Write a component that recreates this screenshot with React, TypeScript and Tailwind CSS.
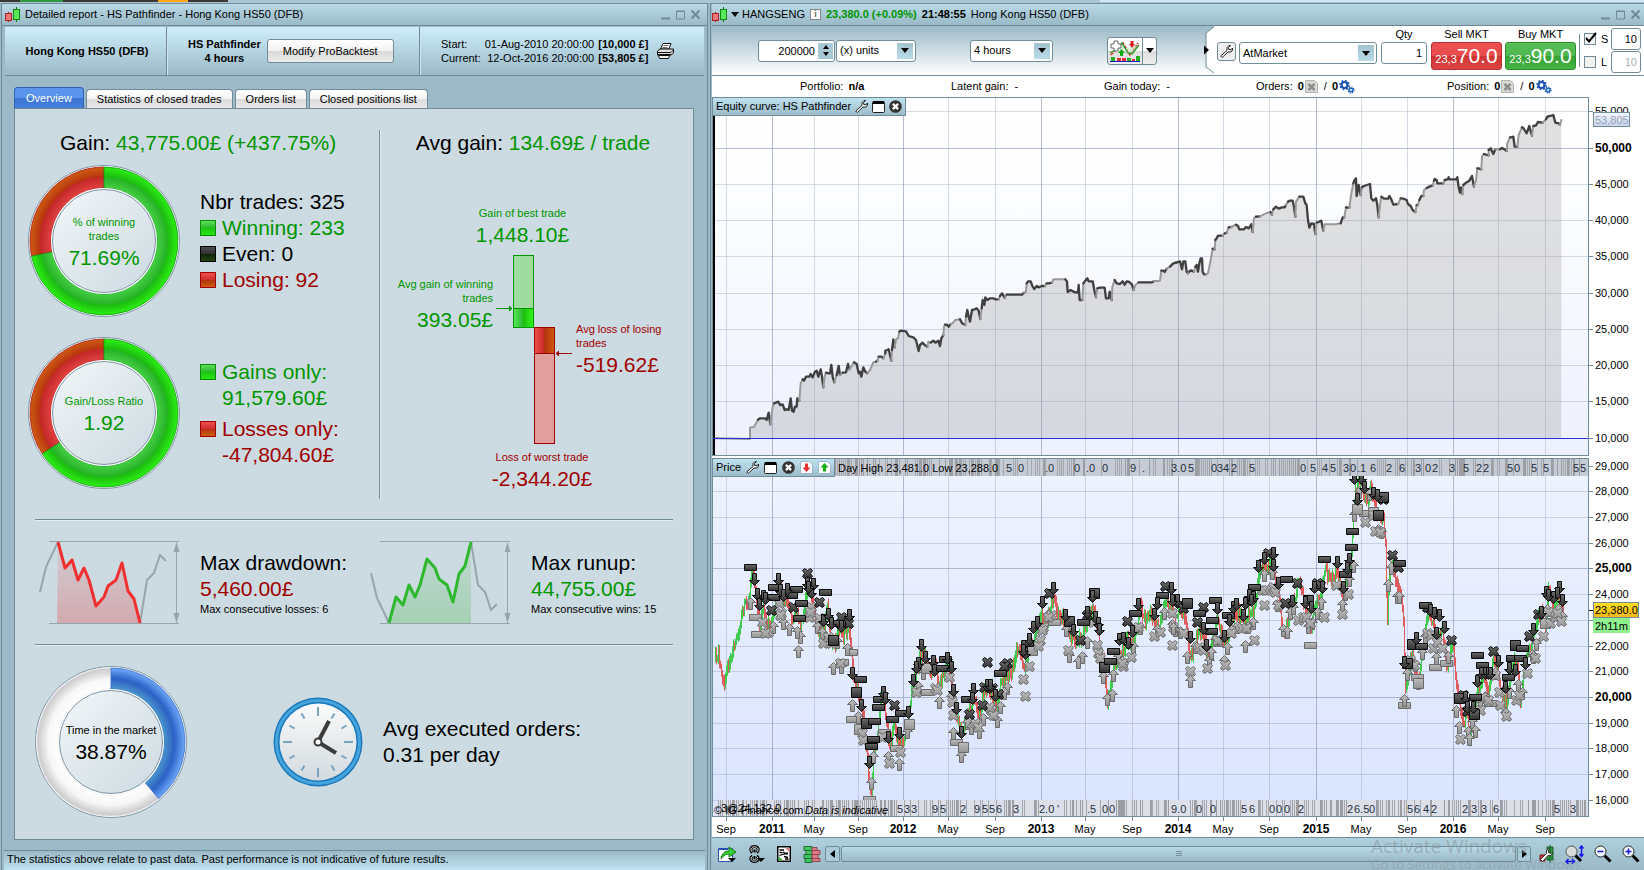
import React from "react";

/* ------------------------------------------------------------------ */
/* Chart data. Coordinates are thirds of a pixel, measured from the    */
/* origin of each plot.                                                */
/* ------------------------------------------------------------------ */

// "d" runs are bars with an open position, "g" runs are bars out of the market.
const EQUITY_A = `g 45,1045 150,1047 150,1013 162,1011 174,989
d 180,985 195,985 200,990 206,968 211,1003
g 218,950 222,940
d 228,938 235,935 240,945 248,943 254,960 260,958 266,960 272,925 276,962 281,965 285,950 290,950 292,925 298,932
g 302,880 308,868
d 312,872 318,860 328,860 332,852 338,862 345,845 350,842 355,860 362,838 366,860 370,892
g 374,860 378,848
d 386,850 390,850 394,825 398,860 403,877
g 410,855
d 416,828 420,855
g 428,848
d 438,847 444,822 448,838
g 454,830 462,817
d 470,822 476,850 480,845 484,860 490,832 496,845 502,850
g 510,840 520,817 528,815
d 532,812
g 536,800
d 544,800 550,805
g 556,790
d 556,782 562,780 566,778 570,795 574,812
g 576,780
d 580,748 584,772
g 588,748 594,745 598,725
d 602,722 618,724 626,738 640,742 648,750 656,783 660,765 668,758 674,765 682,770
g 685,755 692,758
d 700,752 706,758 715,752 720,768 724,745 730,735
g 732,710 735,704
d 740,704 746,710 752,702
g 758,700 766,690 780,688
d 786,700 796,705
g 798,680
d 802,660 806,680 810,695 816,660 824,658 830,655 836,662 841,687
g 845,655
d 848,630 853,645 856,622 862,630 870,625 880,625 888,628 896,628
g 900,618
d 906,610 915,624
g 920,614
d 966,614 972,608
g 978,606 980,580
d 984,574 992,574 998,590 1003,597 1010,588 1016,592 1025,588 1035,588
g 1040,580
d 1046,580 1056,578
g 1060,568 1096,568
d 1101,575 1103,606 1112,600 1122,606 1134,608 1136,585 1139,630 1147,630
g 1150,580
d 1156,572 1162,565 1166,574 1178,574 1184,605 1188,622
g 1192,595
d 1200,593 1214,593 1218,625 1226,625 1229,605 1235,630
g 1237,590 1244,570
d 1250,580 1260,582 1268,574 1274,584 1280,574 1288,576 1296,584 1301,600
g 1306,585 1316,577
d 1356,577 1362,574
g 1380,572 1384,542
d 1390,542 1394,546 1400,536
g 1410,530
d 1420,520 1428,518`;

const EQUITY_B = `d 60,514 66,538 70,514 76,514 80,545 84,550
g 88,545
d 92,541 102,545
g 106,530
d 110,525 114,545 118,520 122,505 126,505 128,545 132,553 138,553
g 144,550 152,510 158,476
d 164,478
g 166,450
d 170,445 174,437 188,437
g 194,430
d 200,428
g 206,412
d 214,411
g 228,404
d 234,408 238,418 252,418 258,411 266,415 274,403 278,426
g 282,384 288,380
d 300,379
g 318,370 332,366
d 336,374
g 340,358
d 348,350 356,356 366,352 374,352 378,345
g 384,335
d 390,332 398,332 402,350 406,380
g 408,335 418,320
d 430,320 436,340 440,345 444,390 448,413 454,400 462,402 466,432
g 470,398
d 476,396 484,392 490,422
g 494,403 526,403 542,400
d 548,382 553,382
g 558,352
d 562,353 568,352
g 574,310 580,280
d 584,270 588,265 590,318 596,285 602,315
g 606,292
d 612,288 630,282 634,325 640,332 648,325 652,345 656,382
g 660,345 664,320
d 672,326 684,326 688,318 694,328 700,344 714,342
g 722,325
d 730,326 740,330 744,342 752,348 758,360 766,366
g 770,345
d 774,345
g 778,330
d 784,318 790,318
g 792,300 800,294
d 808,290 818,286
g 822,272
d 824,267 830,270 832,280 850,280
g 854,270
d 862,268 866,262 868,268 888,268 892,262 896,292 900,308 903,292 907,312
g 910,285
d 918,278 928,272 936,258 942,290
g 948,270 952,235
d 956,235 964,238
g 966,200 972,192
d 978,194 986,196
g 986,180
d 992,175 1000,192 1006,178
g 1020,178
d 1026,174 1034,178 1040,183
g 1042,160 1050,142
d 1054,142 1060,140 1064,170 1072,170
g 1076,135 1086,112
d 1090,114 1100,130 1108,108 1116,137
g 1120,108
d 1128,106 1134,96 1148,98
g 1158,88
d 1162,80 1170,78 1180,75 1186,98 1196,100 1200,104
g 1204,90`;

const PRICE_A =
  "45,650 55,640 62,700 72,735 80,690 95,640 110,590 122,540 132,490 142,510 152,400 160,410 168,480 178,560 190,500 200,560 215,540 225,480 240,450 250,500 262,480 275,540 290,510 300,560 315,480 325,440 335,490 345,530 355,580 370,560 380,500 392,600 405,610 415,570 430,590 445,560 452,620 460,730 475,760 490,830 500,950 505,1000 512,1070 520,920 530,910 540,780 548,760 556,830 568,920 580,850 590,900 600,930 612,890 625,820 635,740 648,700 660,650 675,650 690,700 705,680 715,740 730,700 745,660 755,740 770,840 784,880 795,850 805,800 820,780 835,830 850,760 862,740 875,770 890,800 900,740 915,700 930,710 945,640 958,630 970,690 980,640 995,610 1010,560 1025,530 1035,560 1050,500 1060,470 1070,520 1085,530 1100,560 1115,600 1130,600 1145,590 1160,540 1178,500 1190,550 1200,630 1212,680 1220,790 1230,740 1240,690 1255,640 1270,630 1280,590 1295,620 1310,560 1320,500 1335,550 1348,510 1362,540 1378,560 1392,480 1405,500 1415,520 1430,540";
const PRICE_B =
  "60,510 75,530 88,640 100,640 115,560 130,600 145,650 160,580 170,540 185,590 195,620 205,570 220,530 235,520 250,560 265,530 280,520 295,400 310,380 325,380 335,370 350,430 370,590 378,560 390,500 405,480 418,410 428,480 440,520 452,570 465,490 480,470 495,390 505,410 520,420 530,390 545,470 558,430 570,390 577,270 585,160 598,120 610,170 620,200 630,130 640,190 655,230 668,220 675,310 680,560 685,420 695,370 710,440 722,470 730,560 735,760 745,690 755,640 775,730 790,600 800,520 815,540 830,600 845,560 858,690 870,640 878,610 888,740 900,800 910,860 918,800 928,910 940,830 955,730 970,720 985,760 998,650 1012,680 1025,780 1040,790 1055,680 1070,650 1080,790 1092,680 1110,620 1125,560 1140,510 1155,560 1165,440 1180,500 1195,470 1210,520";

type Kind = "r" | "s" | "d" | "x" | "u";
const LIGHT_A: [Kind, string][] = [
  ["r", "166,530 172,583 452,635 427,665 457,838 553,877 508,1076 589,925 682,757 769,907 1063,547"],
  ["u", "151,490 301,592 295,634 268,568 250,550 290,575 220,560 352,560 365,580 400,685 424,682 412,605 440,628 456,796 475,830 520,950 514,1030 565,950 596,972 620,875 670,700 718,785 655,740 760,878 752,770 784,948 800,850 812,865 838,875 848,838 890,842 899,800 920,745 912,760 1098,570 1108,648 1133,665 1147,650 1160,605 1210,712 1240,705 1222,776 1235,765 1255,650 1300,620 1265,665 1320,565 1370,570 1392,520 1415,555 1425,570 1045,525"],
  ["s", "628,852 476,866 679,684 788,922 997,630"],
  ["x", "187,547 205,575 195,580 243,520 238,490 240,525 328,530 333,500 330,515 358,535 370,608 385,590 392,610 420,670 485,880 488,900 568,968 600,935 545,890 648,755 705,745 712,750 748,710 755,785 760,825 826,850 833,862 873,810 880,825 867,800 970,716 976,769 988,678 1020,600 1015,618 1030,560 1025,570 1052,525 1045,530 1180,545 1190,615 1195,640 1200,655 1270,678 1265,670 1292,652 1315,560 1363,588 1380,575 1416,614 1416,520 1420,560 1105,630"],
];
const DARK_A: [Kind, string][] = [
  ["x", "320,398 214,510 280,502 358,485 422,530 445,548 583,796 862,667 920,670 912,678 853,740 845,795 808,822 893,762 875,745 1048,458 1141,600 1280,544 1396,438 1160,525"],
  ["s", "469,757 497,850 398,600 1183,458 1213,680 1106,542"],
  ["r", "151,382 223,440 220,470 289,446 272,466 304,488 298,533 376,455 481,718 416,548 538,776 535,802 521,844 518,896 514,919 577,838 603,820 734,658 725,685 901,698 800,776 980,610 1150,545 1239,634 1230,662 1306,520 1385,466"],
  ["d", "163,418 172,462 188,468 178,492 196,475 235,417 240,450 260,446 250,465 320,430 340,432 332,455 325,440 368,540 385,522 392,548 448,526 423,558 457,700 484,795 550,755 556,775 565,890 598,880 508,966 664,616 676,650 698,662 655,668 649,682 640,720 703,690 742,655 752,682 760,750 769,805 625,815 784,877 820,748 815,775 862,735 870,735 885,765 1026,486 1060,445 1012,545 1000,562 988,598 975,640 968,630 1096,526 1118,570 1162,516 1186,530 1194,550 1198,568 1258,598 1270,595 1285,608 1297,572 1315,492 1370,490 1362,522 1414,445 1415,480 1430,485 1177,468"],
];
const LIGHT_B: [Kind, string][] = [
  ["r", "451,616 733,796 824,682 858,670 770,712 615,218 990,790"],
  ["u", "40,565 60,575 82,650 91,724 105,620 147,662 154,640 166,600 180,600 202,625 193,662 215,570 230,560 256,618 280,550 265,560 313,405 335,400 350,495 368,570 380,575 390,520 400,505 470,520 484,490 445,560 455,550 545,495 568,420 556,462 580,378 583,225 598,155 628,162 655,270 662,275 692,385 685,435 712,470 718,470 733,780 742,702 775,730 786,640 765,675 795,590 828,655 865,650 889,812 898,862 925,875 928,898 937,846 946,872 960,790 975,770 1005,700 1047,755 1075,735 1085,760 1115,645 1127,612 1120,650 1035,820 1160,510 1195,510 1205,530"],
  ["s", "592,208 640,215 775,728 1155,550"],
  ["x", "70,580 91,692 118,620 130,630 142,685 172,600 212,580 245,565 258,565 196,675 281,600 313,495 315,450 305,450 340,440 345,455 355,495 415,540 430,530 438,530 450,550 493,532 528,435 547,522 565,462 616,247 646,272 640,225 660,275 750,660 762,675 800,580 812,585 820,625 832,605 845,625 900,898 965,770 985,780 960,810 1005,705 1018,756 1020,795 1037,828 1067,780 1078,765 1100,700 1125,655 1148,588 1163,515 1170,548 1185,530 1190,520 1203,542"],
];
const DARK_B: [Kind, string][] = [
  ["x", "70,505 130,502 112,545 325,340 375,490 412,430 470,430 480,435 695,345 715,382 800,500 668,178 872,600 910,765 922,812 1000,632 1108,588 1133,522"],
  ["s", "82,488 444,480 655,225 668,170 755,612 742,670 896,775 941,822 1064,616"],
  ["r", "283,440 205,524 118,520 157,541 154,574 166,479 379,418 493,358 556,401 574,320 577,274 795,494 952,646 967,676 946,772 1045,712 1055,655 1080,655 1085,625 718,368 782,617"],
  ["d", "50,480 35,480 90,590 130,565 139,615 170,505 193,588 208,540 220,500 228,492 250,525 266,465 280,470 272,480 255,490 295,378 311,355 340,375 338,340 355,430 395,482 463,440 487,440 530,367 568,358 548,440 435,485 452,500 560,385 583,115 604,115 613,140 590,178 640,160 650,165 767,595 733,665 810,510 822,520 838,525 828,578 853,562 915,770 920,800 938,800 952,724 962,700 975,700 985,700 990,700 1015,664 1048,683 1036,740 1065,690 1095,670 1158,456 1120,568 1198,442 1192,460 1180,470 1205,480 1165,465 1143,515"],
];

type Pt = [number, number];
const parse = (s: string, shift = 0): Pt[] =>
  s.trim().split(/\s+/).map((p) => {
    const [x, y] = p.split(",").map(Number);
    return [x + shift, y];
  });

const hash = (n: number) => {
  const v = Math.sin(n * 127.1 + 11.7) * 43758.5453;
  return v - Math.floor(v);
};

const equityRuns = (() => {
  const runs: { dark: boolean; pts: Pt[] }[] = [];
  let last: Pt | null = null;
  const add = (src: string, shift: number) =>
    src.split("\n").forEach((line) => {
      const pts = parse(line.slice(2), shift);
      runs.push({ dark: line[0] === "d", pts: last ? [last, ...pts] : pts });
      last = pts[pts.length - 1];
    });
  add(EQUITY_A, 0);
  add(EQUITY_B, 1380);
  return runs;
})();
const join = (pts: Pt[]) => pts.map((p) => p.join(",")).join(" ");
const equityArea = "150,1045 " + equityRuns.map((r) => join(r.pts)).join(" ") + " 2584,1045";

const candles = (() => {
  const path = [...parse(PRICE_A), ...parse(PRICE_B, 1380)];
  const out: { x: number; a: number; b: number; up: boolean }[] = [];
  let seg = 0;
  let prev = path[0][1];
  for (let x = 45; x < 2590; x += 3) {
    while (seg < path.length - 2 && path[seg + 1][0] < x) seg++;
    const [x0, y0] = path[seg];
    const [x1, y1] = path[seg + 1];
    const y = y0 + ((y1 - y0) * (x - x0)) / (x1 - x0) + (hash(x) - 0.5) * 28;
    const pad = 6 + hash(x + 5) * 16;
    out.push({ x, a: Math.min(prev, y) - pad, b: Math.max(prev, y) + pad, up: y < prev });
    prev = y;
  }
  return out;
})();

const TIME_TICKS: [number, string][] = [
  [14, "Sep"], [60, "2011"], [102, "May"], [146, "Sep"], [191, "2012"], [236, "May"], [283, "Sep"],
  [329, "2013"], [373, "May"], [420, "Sep"], [466, "2014"], [511, "May"], [557, "Sep"], [604, "2015"],
  [649, "May"], [695, "Sep"], [741, "2016"], [786, "May"], [833, "Sep"],
];
const EQUITY_TICKS: [number, string][] = [
  [14, "55,000"], [51, "50,000"], [87, "45,000"], [123, "40,000"], [159, "35,000"],
  [196, "30,000"], [232, "25,000"], [268, "20,000"], [304, "15,000"], [341, "10,000"],
];
const PRICE_TICKS: [number, string][] = [
  [369, "29,000"], [394, "28,000"], [420, "27,000"], [446, "26,000"], [471, "25,000"], [497, "24,000"],
  [523, ""], [549, "22,000"], [574, "21,000"], [600, "20,000"], [626, "19,000"],
  [651, "18,000"], [677, "17,000"], [703, "16,000"],
];
const TOP_LABELS: [number, string][] = [
  [294, "5"], [306, "0"], [333, ".0"], [362, "0"], [374, ".0"], [390, "0"], [418, "9"], [430, "."],
  [459, "3.0"], [476, "5"], [499, "0"], [505, "3"], [511, "4"], [519, "2"], [537, "5"], [588, "0"],
  [598, "5"], [610, "4"], [618, "5"], [631, "3"], [638, "0"], [645, ".1"], [658, "6"], [674, "2"], [687, "6"], [703, "3"],
  [713, "0"], [720, "2"], [737, "3"], [751, "5"], [764, "2"], [771, "2"], [795, "5"], [802, "0"], [819, "5"], [831, "5"], [861, "5"], [868, "5"],
];
const BOTTOM_LABELS: [number, string][] = [
  [185, "5"], [192, "3"], [199, "3"], [220, "9"], [228, "5"], [248, "2"], [262, "9"], [270, "5"],
  [277, "5"], [284, "6"], [301, "3"], [327, "2.0"], [345, "'"], [375, ".5"], [390, "0"], [397, "0"], [459, "9.0"],
  [484, "0"], [498, "0"], [529, "5"], [537, "6"], [557, "0"], [564, "0"], [572, "0"], [586, "2"], [635, "2"], [642, "6.5"], [657, "0"],
  [695, "5"], [702, "6"], [711, "4"], [719, "2"], [750, "2"], [759, "3"], [769, "3"], [781, "6"], [842, "5"], [858, "3"],
];

/* ------------------------------------------------------------------ */
/* Charts                                                              */
/* ------------------------------------------------------------------ */

const SHAPES: Record<Kind, string> = {
  r: "M-6-3H6V3H-6Z",
  s: "M-5-5H5V5H-5Z",
  d: "M-2-6H2V1H5L0 6L-5 1H-2Z",
  u: "M-2 6H2V-1H5L0-6L-5-1H-2Z",
  x: "M-5-3L-3-5L0-3L3-5L5-3L3 0L5 3L3 5L0 3L-3 5L-5 3L-3 0Z",
};

function Markers({ sets, shift, dark }: { sets: [Kind, string][]; shift: number; dark: boolean }) {
  return (
    <g fill={dark ? "url(#mk-dark)" : "url(#mk-light)"} stroke={dark ? "#0a0a0a" : "#6b6b6b"} strokeWidth={1}>
      {sets.flatMap(([kind, list]) =>
        parse(list, shift).map(([x, y], i) => (
          <path key={kind + i} d={SHAPES[kind]} transform={`translate(${Math.round(x / 3) - 11.5} ${Math.round(y / 3) + 343.5})`} />
        )),
      )}
    </g>
  );
}

function Hatch({ y, h, from, labels, bg }: { y: number; h: number; from: number; labels: [number, string][]; bg: string }) {
  const bars: React.ReactElement[] = [];
  for (let x = from; x < 874; x += 2) {
    if (labels.some(([lx, t]) => x > lx && x < lx + t.length * 6)) continue;
    const k = hash(x + y);
    if (k > 0.28) bars.push(<rect key={x} x={x} y={y} width={k > 0.86 ? 2 : 1} height={h} fill={k > 0.75 ? "#9c9ea3" : "#a6a8af"} />);
  }
  return (
    <g>
      <rect x={from} y={y} width={876 - from} height={h} fill={bg} />
      {bars}
      {labels.map(([x, t], i) => (
        <text key={i} x={x} y={y + 13} fill="#23303f">{t}</text>
      ))}
    </g>
  );
}

function Grid({ top, bottom, rows }: { top: number; bottom: number; rows: [number, string][] }) {
  return (
    <g stroke="#8890b4" strokeWidth={1}>
      {rows.map(([y, t]) => (
        <line key={y} x1={1} x2={876} y1={y + 0.5} y2={y + 0.5} opacity={/^(50|25|20),000/.test(t) && (top > 300 || t[0] === "5") ? 0.6 : 0.32} />
      ))}
      {TIME_TICKS.map(([x, t]) => (
        <line key={x} x1={x + 0.5} x2={x + 0.5} y1={top} y2={bottom} opacity={t[0] === "2" ? 0.6 : 0.32} />
      ))}
    </g>
  );
}

function Charts() {
  return (
    <svg viewBox="0 0 932 740" className="block w-full" fontFamily="'Liberation Sans', Arial, sans-serif" fontSize={11}>
      <defs>
        <linearGradient id="bg-eq" x1="0" y1="0" x2="0" y2="1"><stop offset="0" stopColor="#ffffff" /><stop offset=".3" stopColor="#fcfdff" /><stop offset="1" stopColor="#edf1fe" /></linearGradient>
        <linearGradient id="bg-pr" x1="0" y1="0" x2="0" y2="1"><stop offset="0" stopColor="#eef3ff" /><stop offset="1" stopColor="#dae4ff" /></linearGradient>
        <linearGradient id="mk-dark" x1="0" y1="0" x2="0" y2="1"><stop offset="0" stopColor="#6b6b6b" /><stop offset="1" stopColor="#303030" /></linearGradient>
        <linearGradient id="mk-light" x1="0" y1="0" x2="0" y2="1"><stop offset="0" stopColor="#bcbcbc" /><stop offset="1" stopColor="#949494" /></linearGradient>
        <linearGradient id="tag-y" x1="0" y1="0" x2="0" y2="1"><stop offset="0" stopColor="#ffe11a" /><stop offset="1" stopColor="#f5b616" /></linearGradient>
        <linearGradient id="tag-b" x1="0" y1="0" x2="0" y2="1"><stop offset="0" stopColor="#f4f7ff" /><stop offset="1" stopColor="#c6d4ee" /></linearGradient>
        <clipPath id="clip-pr"><rect x={1} y={379} width={875} height={324} /></clipPath>
      </defs>
      <rect width={932} height={740} fill="#fff" />

      {/* equity curve */}
      <rect x={0.5} y={0.5} width={876} height={358} fill="url(#bg-eq)" />
      <Grid top={1} bottom={358} rows={EQUITY_TICKS} />
      <g transform="translate(-12 -7) scale(.33333)">
        <polygon points={equityArea} fill="#9a9a9a" opacity={0.3} />
        {equityRuns.map((r, i) => (
          <polyline key={i} points={join(r.pts)} fill="none" stroke={r.dark ? "#404040" : "#999"} strokeWidth={r.dark ? 7 : 6} strokeLinejoin="round" strokeLinecap="round" />
        ))}
      </g>
      <rect x={0} y={19} width={3} height={339} fill="#000" />
      <rect x={0} y={341} width={876} height={1} fill="#2c2cd8" />
      <rect x={0.5} y={0.5} width={876} height={358} fill="none" stroke="#708c98" />

      {/* price */}
      <rect x={0.5} y={361.5} width={876} height={358} fill="url(#bg-pr)" />
      <Grid top={379} bottom={703} rows={PRICE_TICKS} />
      <g clipPath="url(#clip-pr)">
        {candles.map((c) => (
          <rect key={c.x} x={c.x / 3 - 12} y={c.a / 3 + 343} width={1} height={(c.b - c.a) / 3} fill={c.up ? "#3fcb4d" : "#e05c5c"} />
        ))}
        <Markers sets={LIGHT_A} shift={0} dark={false} />
        <Markers sets={LIGHT_B} shift={1380} dark={false} />
        <Markers sets={DARK_A} shift={0} dark />
        <Markers sets={DARK_B} shift={1380} dark />
      </g>
      <Hatch y={362} h={17} from={121} labels={TOP_LABELS} bg="#c6cad4" />
      <Hatch y={703} h={16} from={6} labels={BOTTOM_LABELS} bg="#dddfe8" />
      <text x={126} y={375}>Day High 23,481.0 Low 23,288.0</text>
      <text x={9} y={715}>3@24,132.0</text>
      <text x={2} y={717}>© IG-Finance.com</text>
      <text x={93} y={717} fontStyle="italic">Data is indicative</text>
      <rect x={0.5} y={361.5} width={876} height={358} fill="none" stroke="#708c98" />

      {/* axes */}
      {[...EQUITY_TICKS, ...PRICE_TICKS].map(([y, t]) => {
        const bold = y === 51 || y === 471 || y === 600;
        return (
          <g key={y}>
            <line x1={877} x2={881} y1={y + 0.5} y2={y + 0.5} stroke="#708c98" />
            <text x={883} y={y + 4} fontWeight={bold ? 700 : 400} fontSize={bold ? 12 : 11}>{t}</text>
          </g>
        );
      })}
      {TIME_TICKS.map(([x, t]) => {
        const bold = t[0] === "2";
        return (
          <g key={x}>
            <line x1={x + 0.5} x2={x + 0.5} y1={720} y2={724} stroke="#708c98" />
            <text x={x} y={736} textAnchor="middle" fontWeight={bold ? 700 : 400} fontSize={bold ? 12 : 11}>{t}</text>
          </g>
        );
      })}
      <rect x={881.5} y={15.5} width={36} height={14} fill="url(#tag-b)" stroke="#708c98" />
      <text x={883} y={27} fill="#9aa2b8">53,805</text>
      <line x1={877} x2={881} y1={513.5} y2={513.5} stroke="#000" />
      <rect x={881.5} y={505.5} width={45} height={15} fill="url(#tag-y)" stroke="#708c98" />
      <text x={883} y={517}>23,380.0</text>
      <rect x={881} y={521} width={37} height={15} fill="#8ff08f" />
      <text x={883} y={533}>2h11m</text>
    </svg>
  );
}

/* ------------------------------------------------------------------ */
/* Small drawings                                                      */
/* ------------------------------------------------------------------ */

const CandleIcon = () => (
  <svg width="16" height="16" viewBox="0 0 16 16" aria-hidden="true">
    <path d="M3.5 5v10" stroke="#a01818" /><rect x=".5" y="6.5" width="6" height="7" fill="#f07878" stroke="#b02020" />
    <path d="M11.5 0v15" stroke="#107010" /><rect x="8.5" y="2.5" width="6" height="10" fill="#5ce85c" stroke="#0d8a0d" />
  </svg>
);

const WindowButtons = () => (
  <span className="flex items-center gap-1 text-[#6f8b97]">
    <button aria-label="Minimise"><svg width="11" height="11" className="block"><path d="M1 9.5h9" stroke="currentColor" strokeWidth="2" /></svg></button>
    <button aria-label="Maximise"><svg width="11" height="11" className="block"><path d="M1.5 2h8v8h-8zM1 2.5h9" stroke="currentColor" fill="none" /></svg></button>
    <button aria-label="Close"><svg width="11" height="11" className="block"><path d="M1.5 1.5l8 8M9.5 1.5l-8 8" stroke="currentColor" strokeWidth="2" /></svg></button>
  </span>
);

const Wrench = () => (
  <svg width="13" height="13" viewBox="0 0 13 13" className="block" aria-hidden="true">
    <path d="M9 .5L7 2.5v3L.7 11l1.500 1.500L8 7h3l1.500-2V3L11 4.800 8.700 4.300 8.500 2.500 10.500.5z" fill="#fff" stroke="#222" strokeLinejoin="round" />
  </svg>
);
const Maximise = () => (
  <svg width="13" height="13" className="block" aria-hidden="true"><rect x=".5" y="1.5" width="12" height="11" rx="1" fill="#fff" stroke="#222" /><rect x="1" y="1" width="11" height="3" fill="#000" /></svg>
);
const CloseRound = () => (
  <svg width="13" height="13" viewBox="0 0 14 14" className="block" aria-hidden="true"><circle cx="7" cy="7" r="6.8" fill="#333" /><path d="M4.2 4.2l5.6 5.6M9.8 4.2L4.2 9.8" stroke="#fff" strokeWidth="2.4" /></svg>
);
const PageArrow = ({ up }: { up?: boolean }) => (
  <svg width="13" height="13" viewBox="0 0 13 13" className="block" aria-hidden="true">
    <path d="M.5.5h9l3 3v9H.5z" fill="#fff" stroke="#9db4d0" />
    {up ? <path d="M6.500 2L2.500 6.500h2.500v4h3v-4h2.500z" fill="#12b012" /> : <path d="M6.500 11L2.500 6.500h2.500v-4h3v4h2.500z" fill="#e83030" />}
  </svg>
);

const Printer = () => (
  <svg width="19" height="18" viewBox="0 0 19 18" aria-hidden="true">
    <path d="M4.5 7L7 1.5h8L13 7z" fill="#fff" stroke="#111" /><path d="M7.5 3.5h5M6.5 5.5h5" stroke="#777" />
    <path d="M1.5 9L4 7h13.500v4L15 13H1.5z" fill="#ddd" stroke="#111" /><path d="M1 10.5h14M15 10.5L17.500 8" stroke="#111" />
    <path d="M2.5 13.5h11l-1 3h-9z" fill="#fff" stroke="#111" /><path d="M1 12.5h14" stroke="#111" />
  </svg>
);

const sector = (c: number, r0: number, r1: number, from: number, to: number) => {
  const p = (r: number, t: number) => `${c + r * Math.sin(t * 2 * Math.PI)} ${c - r * Math.cos(t * 2 * Math.PI)}`;
  const big = to - from > 0.5 ? 1 : 0;
  return `M${p(r1, from)}A${r1} ${r1} 0 ${big} 1 ${p(r1, to)}L${p(r0, to)}A${r0} ${r0} 0 ${big} 0 ${p(r0, from)}Z`;
};

function Donut({ id, share, tone, children }: { id: string; share: number; tone: "gain" | "time"; children: React.ReactNode }) {
  const gain = tone === "gain";
  return (
    <div className="relative grid size-[152px] shrink-0 place-items-center">
      <svg viewBox="0 0 152 152" className="absolute inset-0" aria-hidden="true">
        <defs>
          <radialGradient id={id + "a"} gradientUnits="userSpaceOnUse" cx="76" cy="76" r="74">
            <stop offset=".71" stopColor={gain ? "#46d046" : "#4a98cc"} />
            <stop offset=".85" stopColor={gain ? "#28b428" : "#2f62c4"} />
            <stop offset=".87" stopColor={gain ? "#1cbc10" : "#3068cc"} />
            <stop offset="1" stopColor={gain ? "#2cf014" : "#6fa8f8"} />
          </radialGradient>
          <radialGradient id={id + "b"} gradientUnits="userSpaceOnUse" cx="76" cy="76" r="74">
            <stop offset=".71" stopColor={gain ? "#e24242" : "#ffffff"} />
            <stop offset=".86" stopColor={gain ? "#c42828" : "#f6f6f6"} />
            <stop offset=".87" stopColor={gain ? "#b83410" : "#f0f0f0"} />
            <stop offset="1" stopColor={gain ? "#cc5c12" : "#c8c8c8"} />
          </radialGradient>
          <linearGradient id={id + "c"} x1="0" y1="0" x2="1" y2="1"><stop offset="0" stopColor="#f2f6f8" /><stop offset="1" stopColor="#ccdae1" /></linearGradient>
        </defs>
        <circle cx="76" cy="76" r="75.5" fill="#fff" stroke="#7f97a6" />
        <path d={sector(76, 53, 74, share, 1)} fill={`url(#${id}b)`} stroke={gain ? "#b01414" : "#e0e0e0"} strokeWidth=".8" />
        <path d={sector(76, 53, 74, 0, share)} fill={`url(#${id}a)`} stroke={gain ? "#0f9c0f" : "#3a70d0"} strokeWidth=".8" />
        <circle cx="76" cy="76" r="53" fill="#fff" />
        <circle cx="76" cy="76" r="51.5" fill={`url(#${id}c)`} stroke="#7f97a6" />
      </svg>
      <div className={"relative pt-1 text-center " + (gain ? "text-[#009600]" : "text-black")}>{children}</div>
    </div>
  );
}

const Swatch = ({ tone }: { tone: "green" | "black" | "red" }) => (
  <span
    className={
      "inline-block size-4 shrink-0 border " +
      (tone === "green"
        ? "border-[#0a8c0a] bg-[linear-gradient(#57e057_0%,#2cb82c_50%,#1cc410_51%,#2ae812_100%)]"
        : tone === "red"
          ? "border-[#a00000] bg-[linear-gradient(#f05050_0%,#cc2c2c_50%,#b43410_51%,#cc5c10_100%)]"
          : "border-black bg-[linear-gradient(#4c4c4c_0%,#303030_50%,#102408_51%,#20480c_100%)]")
    }
  />
);

const TradeBars = () => (
  <svg width="78" height="190" viewBox="0 0 78 190" className="shrink-0" aria-hidden="true">
    <defs>
      <linearGradient id="tb-g"><stop offset="0" stopColor="#5ae65a" /><stop offset=".45" stopColor="#30bc30" /><stop offset=".5" stopColor="#1cbe0c" /><stop offset="1" stopColor="#34f81c" /></linearGradient>
      <linearGradient id="tb-r"><stop offset="0" stopColor="#f05050" /><stop offset=".45" stopColor="#cc2c2c" /><stop offset=".5" stopColor="#b43410" /><stop offset="1" stopColor="#cc5c10" /></linearGradient>
    </defs>
    <rect x="18.5" y=".5" width="20" height="72" fill="#9fdb9f" stroke="#009600" />
    <rect x="18.5" y="53.5" width="20" height="19" fill="url(#tb-g)" stroke="#009600" />
    <rect x="39.5" y="72.5" width="20" height="116" fill="#e09e9e" stroke="#a00000" />
    <rect x="39.5" y="72.5" width="20" height="26" fill="url(#tb-r)" stroke="#a00000" />
    <path d="M1 53.5h15M14 51l3 2.5-3 2.5" stroke="#009600" fill="#009600" />
    <path d="M77 98.5H62M64 96l-3 2.5 3 2.5" stroke="#a00000" fill="#a00000" />
  </svg>
);

function Excursion({ up }: { up?: boolean }) {
  const main = "19,1 26,27 33,19 39,39 45,27 50,39 57,65 65,56 69,45 77,39 83,22 89,50 95,58 101,82";
  return (
    <svg width="141" height="84" viewBox="0 0 141 84" className="shrink-0" fill="none" aria-hidden="true">
      <defs>
        <linearGradient id={up ? "ex-u" : "ex-d"} x1="0" x2="0" y1={up ? "1" : "0"} y2={up ? "0" : "1"}>
          <stop offset="0" stopColor={up ? "#40b840" : "#f03030"} stopOpacity=".08" />
          <stop offset="1" stopColor={up ? "#40b840" : "#e03030"} stopOpacity=".28" />
        </linearGradient>
      </defs>
      <path d="M10 .5h130M10 82.5h130" stroke="#98a6ac" />
      <g transform={up ? "translate(0 83) scale(1 -1)" : undefined}>
        <polygon points={up ? main + " 101,1" : "18,82 " + main} fill={up ? "url(#ex-u)" : "url(#ex-d)"} />
        <polyline points="1,51 7,26 19,1" stroke="#98a6ac" strokeWidth="2" />
        <polyline points="101,82 108,39 115,32 121,14 127,20" stroke="#98a6ac" strokeWidth="2" />
        <polyline points={main} stroke={up ? "#2eb82e" : "#f03030"} strokeWidth="3" strokeLinejoin="round" />
      </g>
      <path d="M137.5 2v80" stroke="#98a6ac" /><path d="M137.5 1l-3 10h6zM137.5 82l-3-10h6z" fill="#98a6ac" />
    </svg>
  );
}

const Clock = () => (
  <svg width="90" height="90" viewBox="0 0 90 90" className="shrink-0" aria-hidden="true">
    <defs><linearGradient id="clk" x1="0" y1="0" x2="0" y2="1"><stop offset="0" stopColor="#fbfbfb" /><stop offset="1" stopColor="#d2dade" /></linearGradient></defs>
    <circle cx="45" cy="45" r="44.5" fill="#1a78bc" /><circle cx="45" cy="45" r="41.5" fill="none" stroke="#45a4dc" strokeWidth="3" />
    <circle cx="45" cy="45" r="38.5" fill="url(#clk)" />
    {Array.from({ length: 12 }, (_, i) => (
      <path key={i} d={i % 3 ? "M45 12v6" : "M45 10v9"} stroke="#78a4bc" strokeWidth="2" transform={`rotate(${i * 30} 45 45)`} />
    ))}
    <path d="M45 45L56 24M45 45l18 11" stroke="#3c3c3c" strokeWidth="4" />
    <circle cx="45" cy="45" r="3.5" fill="#fff" stroke="#3c3c3c" strokeWidth="2" />
  </svg>
);

const Down = () => <svg width="8" height="5" className="block" aria-hidden="true"><path d="M0 0h8L4 5z" /></svg>;

function Select({ label, value, className }: { label: string; value: string; className: string }) {
  return (
    <span className={"relative block h-[22px] shrink-0 " + className}>
      <select aria-label={label} className="h-full w-full appearance-none rounded-[3px] border border-[#708c98] bg-white pl-[3px] text-[11px]">
        <option>{value}</option>
      </select>
      <span className="pointer-events-none absolute top-[3px] right-[3px] grid size-4 place-items-center bg-[linear-gradient(#a4c2cf,#b9dbe8)]">
        <Down />
      </span>
    </span>
  );
}

const Gears = () => (
  <svg width="16" height="14" viewBox="0 0 16 14" aria-hidden="true" fill="none">
    <circle cx="5.5" cy="5" r="3" stroke="#1c4fb0" strokeWidth="2.2" /><circle cx="5.5" cy="5" r="4.6" stroke="#1c4fb0" strokeWidth="1.4" strokeDasharray="1.8 1.8" />
    <circle cx="12" cy="10" r="1.8" stroke="#1c6fd0" strokeWidth="1.6" /><circle cx="12" cy="10" r="3" stroke="#1c4fb0" strokeWidth="1.2" strokeDasharray="1.2 1.15" />
  </svg>
);
const CancelPage = () => (
  <svg width="13" height="13" viewBox="0 0 13 13" aria-hidden="true"><path d="M.5.5h9l3 3v9H.5z" fill="#d8d8d4" stroke="#b4b4b0" /><path d="M3.5 4l6 6M9.5 4l-6 6" stroke="#8c8c8c" strokeWidth="2.5" /></svg>
);

const Magnifier = ({ sign }: { sign: "+" | "-" }) => (
  <svg width="18" height="18" viewBox="0 0 18 18" className="block" aria-hidden="true">
    <path d="M10.5 10.5l6 6" stroke="#000" strokeWidth="3" /><circle cx="6.5" cy="6.5" r="5.5" fill="#f4faff" stroke="#222" />
    <path d={sign === "+" ? "M3.5 6.5h6M6.5 3.5v6" : "M3.5 6.5h6"} stroke="#1818d8" strokeWidth="1.6" />
  </svg>
);

/* ------------------------------------------------------------------ */
/* Report window                                                       */
/* ------------------------------------------------------------------ */

const TABS = [
  { label: "Overview", active: true },
  { label: "Statistics of closed trades" },
  { label: "Orders list" },
  { label: "Closed positions list" },
];

function Report() {
  return (
    <section className="flex w-[707px] shrink-0 flex-col border-x border-t border-[#6f8b97] bg-[#9bb9c7]">
      <header className="flex h-[22px] items-center gap-1 border-b border-[#6f8b97] bg-[linear-gradient(#b9d9e6,#9bbac8)] pr-[6px] pl-[3px]">
        <CandleIcon />
        <h1 className="flex-1">Detailed report - HS Pathfinder - Hong Kong HS50 (DFB)</h1>
        <WindowButtons />
      </header>

      <div className="mx-[3px] mt-[1px] flex h-[49px] border-b border-[#6f8b97] bg-[linear-gradient(#ceeefb,#9bb9c7)]">
        <div className="flex w-[162px] items-center justify-center border-r border-[#6f8b97] pl-[3px] font-bold">Hong Kong HS50 (DFB)</div>
        <div className="flex w-[253px] items-center gap-[6px] border-r border-l border-r-[#6f8b97] border-l-[#cfe6f0] pl-5">
          <p className="text-center leading-[14px] font-bold">HS Pathfinder<br />4 hours</p>
          <button className="h-6 w-[127px] rounded-[3px] border border-[#708c98] bg-[linear-gradient(#fff_0%,#f2f2f2_50%,#dadada_51%,#ececec_100%)]">Modify ProBacktest</button>
        </div>
        <div className="flex flex-1 items-center gap-2 border-l border-[#cfe6f0] pl-5">
          <div className="grid grid-cols-[auto_auto_auto] gap-x-1 leading-[14px]">
            <span>Start:</span><span className="text-right">01-Aug-2010 20:00:00</span><b>[10,000 £]</b>
            <span>Current:</span><span className="text-right">12-Oct-2016 20:00:00</span><b>[53,805 £]</b>
          </div>
          <button aria-label="Print"><Printer /></button>
        </div>
      </div>

      <div className="mt-[11px] ml-3 flex items-end gap-[2px]" role="tablist">
        {TABS.map((t) => (
          <button
            key={t.label}
            role="tab"
            aria-selected={!!t.active}
            className={
              t.active
                ? "h-[21px] rounded-t-[4px] border border-b-0 border-[#2f62b0] bg-[linear-gradient(#5a94ec_0%,#5a94ec_50%,#3c76d4_51%,#4680dc_100%)] px-[11px] text-white"
                : "h-[19px] rounded-t-[4px] border border-b-0 border-[#708c98] bg-[linear-gradient(#fff_0%,#f4f4f4_50%,#dcdcdc_51%,#e8e8e8_100%)] px-[10px]"
            }
          >
            {t.label}
          </button>
        ))}
      </div>

      <div className="mr-[13px] mb-[10px] ml-[12px] flex-1 border border-[#6f8b97] bg-[#ccdae1] text-[21px] leading-[26px]">
        <div className="flex pt-[21px] pb-5">
          <div className="w-[365px] border-r border-[#6f8b97] pb-[10px] pl-[13px]">
            <h2 className="mb-[9px] pl-8">Gain: <span className="text-[#009600]">43,775.00£ (+437.75%)</span></h2>
            <div className="flex items-center gap-5">
              <Donut id="win" share={0.7169} tone="gain">
                <p className="text-[11px] leading-[14px]">% of winning<br />trades</p>
                <p className="pt-[2px]">71.69%</p>
              </Donut>
              <ul>
                <li>Nbr trades: 325</li>
                <li className="flex items-center gap-[6px] text-[#009600]"><Swatch tone="green" />Winning: 233</li>
                <li className="flex items-center gap-[6px]"><Swatch tone="black" />Even: 0</li>
                <li className="flex items-center gap-[6px] text-[#a00000]"><Swatch tone="red" />Losing: 92</li>
              </ul>
            </div>
            <div className="mt-5 flex items-center gap-5">
              <Donut id="ratio" share={0.657} tone="gain">
                <p className="text-[11px] leading-[14px]">Gain/Loss Ratio</p>
                <p className="pt-[2px]">1.92</p>
              </Donut>
              <dl>
                <dt className="flex items-center gap-[6px] text-[#009600]"><Swatch tone="green" />Gains only:</dt>
                <dd className="pl-[22px] text-[#009600]">91,579.60£</dd>
                <dt className="mt-[5px] flex items-center gap-[6px] text-[#a00000]"><Swatch tone="red" />Losses only:</dt>
                <dd className="pl-[22px] text-[#a00000]">-47,804.60£</dd>
              </dl>
            </div>
          </div>

          <div className="flex-1 border-l border-[#e4eef4]">
            <h2 className="pr-2 text-center">Avg gain: <span className="text-[#009600]">134.69£ / trade</span></h2>
            <div className="mt-[50px] pr-[29px] text-center text-[#009600]">
              <p className="text-[11px] leading-[14px]">Gain of best trade</p>
              <p className="pt-[2px]">1,448.10£</p>
            </div>
            <div className="mt-[7px] flex">
              <div className="mr-[2px] w-[112px] pt-[22px] text-right text-[#009600]">
                <p className="text-[11px] leading-[14px]">Avg gain of winning<br />trades</p>
                <p className="pt-[2px]">393.05£</p>
              </div>
              <TradeBars />
              <div className="ml-[3px] pt-[67px] text-[#a00000]">
                <p className="text-[11px] leading-[14px]">Avg loss of losing<br />trades</p>
                <p className="pt-[2px]">-519.62£</p>
              </div>
            </div>
            <div className="mt-[5px] pl-[10px] text-center text-[#a00000]">
              <p className="text-[11px] leading-[14px]">Loss of worst trade</p>
              <p className="pt-[2px]">-2,344.20£</p>
            </div>
          </div>
        </div>

        <div className="mx-5 flex border-t border-[#6f8b97] pt-[21px] pb-[19px] shadow-[inset_0_1px_0_#e4eef4]">
          <div className="flex w-[331px] gap-5 pl-1">
            <Excursion />
            <div className="pt-[9px]">
              <h3>Max drawdown:</h3>
              <p className="text-[#a00000]">5,460.00£</p>
              <p className="text-[11px] leading-[14px]">Max consecutive losses: 6</p>
            </div>
          </div>
          <div className="flex flex-1 gap-5 pl-1">
            <Excursion up />
            <div className="pt-[9px]">
              <h3>Max runup:</h3>
              <p className="text-[#009600]">44,755.00£</p>
              <p className="text-[11px] leading-[14px]">Max consecutive wins: 15</p>
            </div>
          </div>
        </div>

        <div className="mx-5 flex items-center border-t border-[#6f8b97] pt-[21px] pb-[19px] shadow-[inset_0_1px_0_#e4eef4]">
          <Donut id="time" share={0.3887} tone="time">
            <p className="text-[11px] leading-[14px]">Time in the market</p>
            <p className="pt-[2px]">38.87%</p>
          </Donut>
          <div className="ml-[86px] flex items-center gap-5">
            <Clock />
            <p>Avg executed orders:<br />0.31 per day</p>
          </div>
        </div>
      </div>

      <footer className="mx-[2px] h-5 border-t border-[#6f8b97] bg-[linear-gradient(#9bb9c7,#bfe3f1)] pl-[3px] leading-[17px]">
        The statistics above relate to past data. Past performance is not indicative of future results.
      </footer>
    </section>
  );
}

/* ------------------------------------------------------------------ */
/* Chart window                                                        */
/* ------------------------------------------------------------------ */

function PriceButton({ label, lead, main, tone }: { label: string; lead: string; main: string; tone: "sell" | "buy" }) {
  return (
    <div className="flex w-[71px] shrink-0 flex-col items-center">
      <span className="leading-4">{label}</span>
      <button
        aria-label={label}
        className={
          "flex h-7 w-full items-baseline justify-center rounded-[3px] border text-white " +
          (tone === "sell"
            ? "border-[#b83030] bg-[linear-gradient(#ec5050_0%,#e84c4c_48%,#cf3434_50%,#dc4444_100%)]"
            : "border-[#309030] bg-[linear-gradient(#58be58_0%,#50b850_48%,#36a236_50%,#44b444_100%)]")
        }
      >
        <span>{lead}</span>
        <span className="text-[21px] leading-[26px]">{main}</span>
      </button>
    </div>
  );
}

function Toolbar() {
  return (
    <div className="flex h-[49px] bg-[linear-gradient(#9bb9c7,#ffffff)]">
      <div className="flex flex-1 items-center pl-[46px]">
        <span className="relative block h-[22px] w-[77px]">
          <input aria-label="Bars" defaultValue="200000" className="h-full w-full rounded-[3px] border border-[#708c98] bg-white pr-[19px] text-right text-[11px]" />
          <span className="pointer-events-none absolute top-[3px] right-[2px] grid h-4 w-[15px] place-items-center content-center gap-[3px] bg-[#a9c8d5]">
            <svg width="6" height="4" className="block"><path d="M0 4h6L3 0z" /></svg>
            <svg width="6" height="4" className="block"><path d="M0 0h6L3 4z" /></svg>
          </span>
        </span>
        <Select label="Units" value="(x) units" className="ml-[1px] w-20" />
        <Select label="Time frame" value="4 hours" className="ml-[54px] w-[83px]" />
        <button aria-label="Add indicator" className="ml-[54px] flex h-7 w-[50px] items-center rounded-[3px] border border-[#708c98] bg-[linear-gradient(#fff_0%,#fff_50%,#ddd_51%,#eee_100%)]">
          <svg width="34" height="24" viewBox="0 0 34 24" className="block">
            <path d="M3 16l6-7 6-5 7 12 8-12" stroke="#e03030" strokeWidth="1.6" strokeDasharray="3 1" fill="none" />
            <path d="M2 14l7-4 5-6 6 10 4 1 7-9" stroke="#2a9a2a" strokeWidth="1.4" fill="#bfe8c0" fillOpacity=".6" />
            <path d="M6 2h4v3h3v4h-3v3H6V9H3V5h3z" fill="#fff" stroke="#666" />
            <path d="M13.5 10L10 14h2v3h3v-3h2z" fill="#12a812" /><path d="M24 9l-3-4h1.500V2h3v3H27z" fill="#e02020" />
            <path d="M3 18h4v4H3zM19 19h4v3h-4zM28 17h4v5h-4z" fill="#20b020" /><path d="M9 19h4v3H9zM14 19h4v3h-4zM24 20h3v2h-3z" fill="#e03030" />
            <path d="M2 22.5h30" stroke="#1818c8" />
          </svg>
          <span className="grid h-full flex-1 place-items-center border-l border-[#708c98]"><Down /></span>
        </button>
      </div>
      <svg width="12" height="48" viewBox="0 0 12 48" className="shrink-0" aria-hidden="true">
        <path d="M12 1L4 7v34l8 6z" fill="#fff" /><path d="M12 1L4 7v34l8 6" fill="none" stroke="#708c98" /><path d="M2 19.5v9l5-4.500z" />
      </svg>
      <div className="flex w-[430px] shrink-0 bg-white">
        <button aria-label="Order settings" className="mt-4 ml-[3px] grid size-[19px] place-items-center rounded-[3px] border border-[#708c98] bg-[#eee]"><Wrench /></button>
        <div className="mt-4 ml-[3px]"><Select label="Order type" value="AtMarket" className="w-[138px]" /></div>
        <label className="ml-[4px] flex w-[46px] flex-col items-center leading-4">
          Qty
          <input defaultValue="1" className="h-[22px] w-full rounded-[3px] border border-[#708c98] pr-1 text-right text-[11px]" />
        </label>
        <div className="ml-1 flex gap-[3px]">
          <PriceButton label="Sell MKT" lead="23,3" main="70.0" tone="sell" />
          <PriceButton label="Buy MKT" lead="23,3" main="90.0" tone="buy" />
        </div>
        <div className="mt-2 ml-[3px] grid h-[33px] w-px bg-[#708c98]" />
        <div className="ml-1 flex flex-col gap-[1px] pt-[2px]">
          <div className="flex items-center">
            <label className="flex w-[27px] items-center gap-[5px]">
              <span className="relative grid size-3 border border-[#708c98] bg-[#f2f2f2]">
                <input type="checkbox" defaultChecked className="absolute inset-0 appearance-none" />
                <svg width="12" height="12" className="pointer-events-none absolute -top-[2px] left-0"><path d="M1 6l3 3.5L11 1" fill="none" stroke="#000" strokeWidth="2" /></svg>
              </span>
              S
            </label>
            <input aria-label="Stop distance" defaultValue="10" className="h-[22px] w-[30px] rounded-[3px] border border-[#708c98] pr-[3px] text-right text-[11px]" />
          </div>
          <div className="flex items-center">
            <label className="flex w-[27px] items-center gap-[5px]">
              <span className="relative grid size-3 border border-[#708c98] bg-[#f2f2f2]"><input type="checkbox" className="absolute inset-0 appearance-none" /></span>
              L
            </label>
            <input aria-label="Limit distance" defaultValue="10" className="h-[22px] w-[30px] rounded-[3px] border border-[#708c98] pr-[3px] text-right text-[11px] text-[#a8b0b6]" />
          </div>
        </div>
      </div>
    </div>
  );
}

const Counts = ({ label }: { label: string }) => (
  <span className="flex items-center">
    {label}:<b className="pr-[1px] pl-[5px]">0</b><CancelPage /><span className="pr-[5px] pl-[6px]">/</span><b className="pr-[1px]">0</b><Gears />
  </span>
);

function ChartWindow() {
  return (
    <section className="ml-[2px] flex min-w-0 flex-1 flex-col border-t border-l border-[#6f8b97] bg-[#9bb9c7] pl-[1px]">
      <header className="flex h-[22px] items-center border-b border-[#6f8b97] bg-[linear-gradient(#b9d9e6,#9bbac8)] pr-[3px]">
        <CandleIcon />
        <span className="mx-[3px]"><Down /></span>
        <h1>HANGSENG</h1>
        <span className="mx-[5px] grid size-[11px] place-items-center border border-[#888] bg-white text-[9px] leading-[9px] font-bold text-[#666]">i</span>
        <span className="font-bold text-[#009600]">23,380.0 (+0.09%)</span>
        <b className="mx-[5px]">21:48:55</b>
        <span className="flex-1">Hong Kong HS50 (DFB)</span>
        <WindowButtons />
      </header>
      <Toolbar />
      <div className="grid h-[22px] grid-cols-[151px_153px_152px_191px_1fr] items-center border-t border-[#708c98] bg-white pl-[88px]">
        <span>Portfolio: <b className="pl-[2px]">n/a</b></span>
        <span>Latent gain: &nbsp;-</span>
        <span>Gain today: &nbsp;-</span>
        <Counts label="Orders" />
        <Counts label="Position" />
      </div>
      <div className="relative">
        <Charts />
        <div className="absolute top-0 left-0 flex h-[19px] items-center gap-1 border border-[#708c98] bg-[linear-gradient(#c0e2ef,#9dbcca)] px-[3px]">
          Equity curve: HS Pathfinder
          <button aria-label="Configure equity curve"><Wrench /></button>
          <button aria-label="Detach equity curve"><Maximise /></button>
          <button aria-label="Remove equity curve"><CloseRound /></button>
        </div>
        <div className="absolute top-[361px] left-0 flex h-[19px] items-center gap-[5px] border border-[#708c98] bg-[linear-gradient(#c0e2ef,#9dbcca)] px-[3px]">
          Price
          <button aria-label="Configure price"><Wrench /></button>
          <button aria-label="Detach price"><Maximise /></button>
          <button aria-label="Remove price"><CloseRound /></button>
          <button aria-label="Sell marker"><PageArrow /></button>
          <button aria-label="Buy marker"><PageArrow up /></button>
        </div>
      </div>
      <div className="relative flex h-[33px] flex-1 items-center overflow-hidden border-t border-[#708c98] bg-[linear-gradient(#aecfdc,#9bb9c7)] pr-1 pl-[6px]">
        <div className="flex w-[103px] items-center justify-between">
          <button aria-label="Export chart">
            <svg width="19" height="18" viewBox="0 0 19 18" className="block"><path d="M.5 3.5h14v13H.5z" fill="#fff" stroke="#2a50b8" /><path d="M1 4h9" stroke="#2a50b8" strokeWidth="2" /><path d="M3 14c1-6 4-8 8-8V2l7 5-7 5V9c-3 0-5 1-8 5z" fill="#38d038" stroke="#117a11" /><path d="M10 13h8l-4 4z" /></svg>
          </button>
          <button aria-label="Link windows">
            <svg width="16" height="18" viewBox="0 0 16 18" className="block" fill="none"><path d="M3.500 7.5C.5 5 2 1.5 5.500 1.5S10.500 5 7.500 7.500M3.500 11C.5 13.500 2 16.500 5.500 16.500S10.500 13.500 7.500 11" stroke="#000" strokeWidth="3" /><path d="M3.500 7.200C.8 5 2 1.800 5.500 1.800S10.200 5 7.500 7.200M3.500 11.300C.8 13.500 2 16.200 5.500 16.200S10.200 13.500 7.500 11.300" stroke="#fff" /><path d="M5.500 4.500v3M5.500 11v3" stroke="#000" strokeWidth="2" /><path d="M8 13h8l-4 4z" fill="#000" /></svg>
          </button>
          <button aria-label="Order book">
            <svg width="14" height="16" viewBox="0 0 14 16" className="block"><rect x=".75" y=".75" width="12.500" height="14.500" fill="#fff" stroke="#000" strokeWidth="1.5" /><path d="M2.500 4H7M2.500 6.500h3M6 6l2 1 3 1M2.500 9.500L7 8l4-1M7 10.500l4 1M8 13h3.500" stroke="#000" strokeWidth="1.300" fill="none" /><path d="M8 2h4.500v4z" fill="#e08080" /><path d="M1.500 14.500V10l4.500 4.500z" fill="#38b838" /></svg>
          </button>
          <button aria-label="Depth">
            <svg width="18" height="17" viewBox="0 0 18 17" className="block"><path d="M1 .5h8v4H1zM3 4.5h6v4H3zM1 8.5h8v4H1zM2 12.5h7v4H2z" fill="#3cc85c" stroke="#2a6a3a" /><path d="M9 1.5h5v3H9zM9 4.5h8v4H9zM9 8.5h6v4H9zM9 12.5h8v3H9z" fill="#e07888" stroke="#8a4a52" /></svg>
          </button>
        </div>
        <div className="ml-[4px] flex h-4 flex-1 items-stretch gap-[1px]">
          <button aria-label="Scroll left" className="grid w-[15px] place-items-center rounded-[2px] border border-[#708c98] bg-[#aacbd8]"><svg width="5" height="8" className="block"><path d="M5 0v8L0 4z" /></svg></button>
          <div className="grid flex-1 place-items-center rounded-[2px] border border-[#708c98] bg-[linear-gradient(#b8dae7,#9bb9c7)]">
            <svg width="6" height="6" className="block"><path d="M0 .5h6M0 2.5h6M0 4.5h6" stroke="#7893a0" /></svg>
          </div>
          <button aria-label="Scroll right" className="grid w-[14px] place-items-center rounded-[2px] border border-[#708c98] bg-[#aacbd8]"><svg width="5" height="8" className="block"><path d="M0 0v8l5-4z" /></svg></button>
        </div>
        <div className="ml-2 flex items-center gap-[10px]">
          <button aria-label="Chart settings">
            <svg width="16" height="18" viewBox="0 0 16 18" className="block"><path d="M8 2h6v13H8z" fill="#2f9a42" stroke="#1a5c26" /><path d="M11 0v18" stroke="#1a5c26" /><path d="M1 10h5v6H1z" fill="#d83838" stroke="#701818" /><path d="M9 4L7.500 6v2.500L1.500 14.500l2 2L9 10.500h2.500L13.500 9V7.500L11.500 8.500 9.500 7.500V5.500L11 4z" fill="#fff" stroke="#333" /></svg>
          </button>
          <button aria-label="Zoom to fit">
            <svg width="19" height="19" viewBox="0 0 19 19" className="block"><path d="M9 9l7 7" stroke="#000" strokeWidth="3" /><circle cx="6.5" cy="6.5" r="5.5" fill="#d8dcdc" stroke="#555" /><path d="M16.500 2v8M14.500 3.500L16.500 1l2 2.500M14.500 9l2 2.500 2-2.500M1 16.500h8M3.500 14L1 16.500 3.500 19M7 14l2.500 2.500L7 19" stroke="#1818e0" strokeWidth="1.5" fill="none" /></svg>
          </button>
          <button aria-label="Zoom out"><Magnifier sign="-" /></button>
          <button aria-label="Zoom in"><Magnifier sign="+" /></button>
        </div>
        <div className="pointer-events-none absolute top-0 left-[659px] font-['Open_Sans',sans-serif] whitespace-nowrap text-[#8a99a2]/60">
          <p className="text-[19px] leading-[16px]">Activate Windows</p>
          <p className="mt-[3px] text-[13px] leading-[14px]">Go to Settings to activate Windows.</p>
        </div>
      </div>
    </section>
  );
}

export default function App() {
  return (
    <main className="flex min-h-screen flex-col bg-[#9bb9c7] font-['Liberation_Sans',Arial,sans-serif] text-[11px] text-black">
      <div className="flex h-[3px] shrink-0 bg-[#a9c6d2]" aria-hidden="true">
        <div className="h-[2px] w-5 bg-[#3a3634]" />
        <div className="h-[2px] w-[43px] bg-[#2f9a42]" />
        <div className="h-[2px] w-[95px] bg-[#3a3634]" />
        <div className="h-[2px] w-[30px] bg-[#ffa510]" />
        <div className="h-[2px] w-10 bg-[#3a3634]" />
        <div className="h-[2px] w-[872px] bg-[#a9c6d2]" />
        <div className="h-[2px] flex-1 bg-[#cfe6f4]" />
      </div>
      <div className="flex flex-1 pl-[1px]">
        <Report />
        <ChartWindow />
      </div>
    </main>
  );
}
